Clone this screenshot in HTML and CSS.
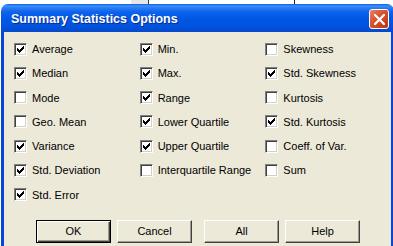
FILE: index.html
```html
<!DOCTYPE html>
<html lang="en">
<head>
    <meta charset="UTF-8">
    <meta name="viewport" content="width=device-width, initial-scale=1.0">
    <title>Summary Statistics Options</title>
    <link rel="stylesheet" href="styles.css">
</head>
<body>
    <div class="window">
        <div class="titlebar">
            <span class="title">Summary Statistics Options</span>
            <span class="close">
                <svg width="11" height="11" viewBox="0 0 11 11">
                    <path d="M1 1L10 10M10 1L1 10" stroke="#fff" stroke-width="2.2" stroke-linecap="square"/>
                </svg>
            </span>
        </div>
        <div class="content">
            <div class="options">
                <div class="col">
                    <label class="opt checked"><span class="box"></span>Average</label>
                    <label class="opt checked"><span class="box"></span>Median</label>
                    <label class="opt"><span class="box"></span>Mode</label>
                    <label class="opt"><span class="box"></span>Geo. Mean</label>
                    <label class="opt checked"><span class="box"></span>Variance</label>
                    <label class="opt checked"><span class="box"></span>Std. Deviation</label>
                    <label class="opt checked"><span class="box"></span>Std. Error</label>
                </div>
                <div class="col">
                    <label class="opt checked"><span class="box"></span>Min.</label>
                    <label class="opt checked"><span class="box"></span>Max.</label>
                    <label class="opt checked"><span class="box"></span>Range</label>
                    <label class="opt checked"><span class="box"></span>Lower Quartile</label>
                    <label class="opt checked"><span class="box"></span>Upper Quartile</label>
                    <label class="opt"><span class="box"></span>Interquartile Range</label>
                </div>
                <div class="col">
                    <label class="opt"><span class="box"></span>Skewness</label>
                    <label class="opt checked"><span class="box"></span>Std. Skewness</label>
                    <label class="opt"><span class="box"></span>Kurtosis</label>
                    <label class="opt checked"><span class="box"></span>Std. Kurtosis</label>
                    <label class="opt"><span class="box"></span>Coeff. of Var.</label>
                    <label class="opt"><span class="box"></span>Sum</label>
                </div>
            </div>
            <div class="buttons">
                <button class="btn default">OK</button>
                <button class="btn">Cancel</button>
                <button class="btn wide-gap">All</button>
                <button class="btn">Help</button>
            </div>
        </div>
    </div>

    <script>
        // draw the classic check mark into every checked box
        document.querySelectorAll(".opt.checked .box").forEach(box => {
            box.innerHTML = `
                <svg width="7" height="7" viewBox="0 0 7 7" shape-rendering="crispEdges">
                    <path d="M0 2v3h1v1h1v1h1v-1h1v-1h1v-1h1v-1h1v-3h-1v1h-1v1h-1v1h-1v1h-1v-1h-1v-1h-1z" fill="#000"/>
                </svg>`;
        });
    </script>
</body>
</html>
```

FILE: styles.css
```css
body {
    margin: 0;
    width: 393px;
    height: 246px;
    overflow: hidden;
    font-family: "Liberation Sans", Arial, sans-serif;
    font-size: 11px;
    background: linear-gradient(to right, #fff 131px, #e6e6e6 131px, #e6e6e6 148px, #3a3a3a 148px, #3a3a3a 149px, #fff 149px, #fff 294px, #222 294px, #222 295px, #fff 295px);
}
.window {
    margin: 4px 0 0 1px;
    width: 393px;
    height: 242px;
    display: flex;
    flex-direction: column;
}
.titlebar {
    height: 28px;
    border-radius: 7px 7px 0 0;
    background: linear-gradient(to bottom, #0a5fe8 0, #3d8ff7 2px, #2a7bf3 4px, #0d63ec 8px, #0058e6 50%, #0053de 80%, #0848c9 100%);
    display: flex;
    align-items: center;
    padding: 0 5px 0 10px;
    flex-shrink: 0;
}
.title {
    color: #fff;
    font-weight: bold;
    font-size: 12.5px;
    text-shadow: 1px 1px 0 #0c2a8c;
    margin-top: 1px;
}
.close {
    margin-left: auto;
    margin-top: 2px;
    width: 18px;
    height: 18px;
    border: 1px solid #fff;
    border-radius: 3px;
    background: linear-gradient(135deg, #e9825f 0, #dc5a34 35%, #c9401c 75%, #b7361a 100%);
    display: flex;
    align-items: center;
    justify-content: center;
}
.content {
    flex: 1;
    min-height: 0;
    background: #ece9d8;
    border-left: 3px solid #0747d6;
    border-right: 3px solid #0747d6;
    padding: 5px 0 0 10px;
}
.options {
    display: flex;
}
.col {
    width: 127px;
    display: flex;
    flex-direction: column;
}
.opt {
    height: 24.25px;
    display: flex;
    align-items: center;
    color: #000;
}
.box {
    width: 9px;
    height: 9px;
    margin-right: 5px;
    background: #fff;
    border-style: solid;
    border-width: 1px;
    border-color: #808080 #fff #fff #808080;
    box-shadow: inset 1px 1px 0 #404040, inset -1px -1px 0 #d4d0c8;
    padding: 1px;
    display: flex;
    align-items: center;
    justify-content: center;
}
.box svg {
    display: block;
}
.buttons {
    display: flex;
    margin-top: 13px;
    padding-left: 22px;
    gap: 6px;
}
.btn {
    width: 75px;
    height: 23px;
    padding: 0;
    font-family: "Liberation Sans", Arial, sans-serif;
    font-size: 11px;
    color: #000;
    background: #ece9d8;
    border-style: solid;
    border-width: 1px;
    border-color: #fff #404040 #404040 #fff;
    box-shadow: inset -1px -1px 0 #9d9a8c;
}
.btn.default {
    border-color: #000;
    box-shadow: inset 1px 1px 0 #fff, inset -1px -1px 0 #404040, inset -2px -2px 0 #9d9a8c;
}
.btn.wide-gap {
    margin-left: 6px;
}
```
